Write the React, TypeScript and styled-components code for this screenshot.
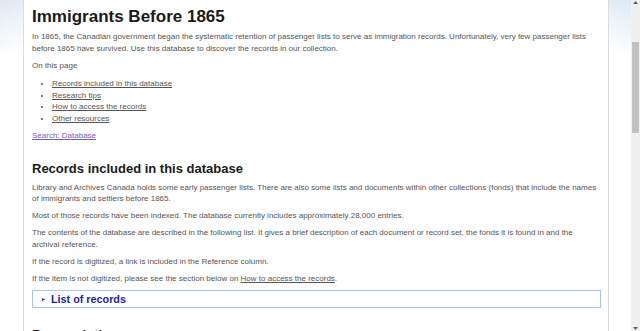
import React from "react";
import styled, { createGlobalStyle } from "styled-components";

const Global = createGlobalStyle`
  html, body {
    margin:0;
    padding:0;
    overflow:hidden;
    background:#fff;
  }
`;

const Page = styled.div`
  display:flex;
  width:640px;
  height:331px;
  overflow:hidden;
  font-family:"Liberation Sans", Arial, sans-serif;
`;

const Gutter = styled.div<{ $w: number; $side: "left" | "right" }>`
  width:${(p) => p.$w}px;
  flex:none;
  background:
    linear-gradient(${(p) => (p.$side === "left" ? "160deg" : "200deg")}, #dfe9f2 0px, #edf3f8 25px, #ffffff 55px);
  border-${(p) => (p.$side === "left" ? "right" : "left")}:1px solid #dcdcdc;
`;

const Main = styled.main`
  flex:1;
  padding:0 7px 0 8px;
  overflow:hidden;
`;

const Title = styled.h1`
  margin:7px 0 4px;
  font-size:17px;
  line-height:20px;
  font-weight:bold;
  color:#1a1a1a;
`;

const Para = styled.p`
  margin:0 0 5.5px;
  font-size:8px;
  line-height:11.5px;
  color:#555;
`;

const List = styled.ul`
  margin:7px 0 6px;
  padding-left:20px;
  font-size:8px;
  line-height:11.5px;
  color:#555;
`;

const Link = styled.a<{ $visited?: boolean }>`
  color:${(p) => (p.$visited ? "#7a5bc4" : "#555")};
  text-decoration:underline;
`;

const Section = styled.h2`
  margin:19px 0 5px;
  font-size:13px;
  line-height:16px;
  font-weight:bold;
  color:#1a1a1a;
`;

const Details = styled.div`
  margin-top:6px;
  border:1px solid #a9c4ef;
  height:16px;
  display:flex;
  align-items:center;
  gap:5px;
  padding-left:8px;
  color:#1c22b0;
  font-size:10.8px;
  font-weight:bold;
`;

const Arrow = styled.span`
  font-size:5px;
`;

const Scrollbar = styled.div`
  width:9px;
  flex:none;
  background:#f0f0f0;
  display:flex;
  flex-direction:column;
  align-items:center;
  padding:1px 0;
  box-sizing:border-box;
`;

const Thumb = styled.div`
  width:7px;
  height:91px;
  margin-top:38px;
  background:#c1c1c1;
`;

const Spacer = styled.div`
  flex:1;
`;

const ScrollArrow = styled.svg`
  width:5px;
  height:3px;
  flex:none;
`;

export default function App() {
  return (
    <Page>
      <Global />
      <Gutter $w={23} $side="left" />
      <Main>
        <Title>Immigrants Before 1865</Title>
        <Para>
          In 1865, the Canadian government began the systematic retention of passenger lists to serve as immigration records. Unfortunately, very few passenger lists before 1865 have survived. Use this database to discover the records in our collection.
        </Para>
        <Para>On this page</Para>
        <List>
          <li><Link href="#">Records included in this database</Link></li>
          <li><Link href="#">Research tips</Link></li>
          <li><Link href="#">How to access the records</Link></li>
          <li><Link href="#">Other resources</Link></li>
        </List>
        <Para><Link $visited href="#">Search: Database</Link></Para>
        <Section>Records included in this database</Section>
        <Para>
          Library and Archives Canada holds some early passenger lists. There are also some lists and documents within other collections (fonds) that include the names of immigrants and settlers before 1865.
        </Para>
        <Para>Most of those records have been indexed. The database currently includes approximately 28,000 entries.</Para>
        <Para>
          The contents of the database are described in the following list. It gives a brief description of each document or record set, the fonds it is found in and the archival reference.
        </Para>
        <Para>If the record is digitized, a link is included in the Reference column.</Para>
        <Para>
          If the item is not digitized, please see the section below on <Link href="#">How to access the records</Link>.
        </Para>
        <Details>
          <Arrow>►</Arrow>List of records
        </Details>
        <Section>Research tips</Section>
      </Main>
      <Gutter $w={22} $side="right" />
      <Scrollbar>
        <ScrollArrow viewBox="0 0 5 3"><path d="M2.5 0 L5 3 L0 3 Z" fill="#606060" /></ScrollArrow>
        <Thumb />
        <Spacer />
        <ScrollArrow viewBox="0 0 5 3"><path d="M0 0 L5 0 L2.5 3 Z" fill="#606060" /></ScrollArrow>
      </Scrollbar>
    </Page>
  );
}
